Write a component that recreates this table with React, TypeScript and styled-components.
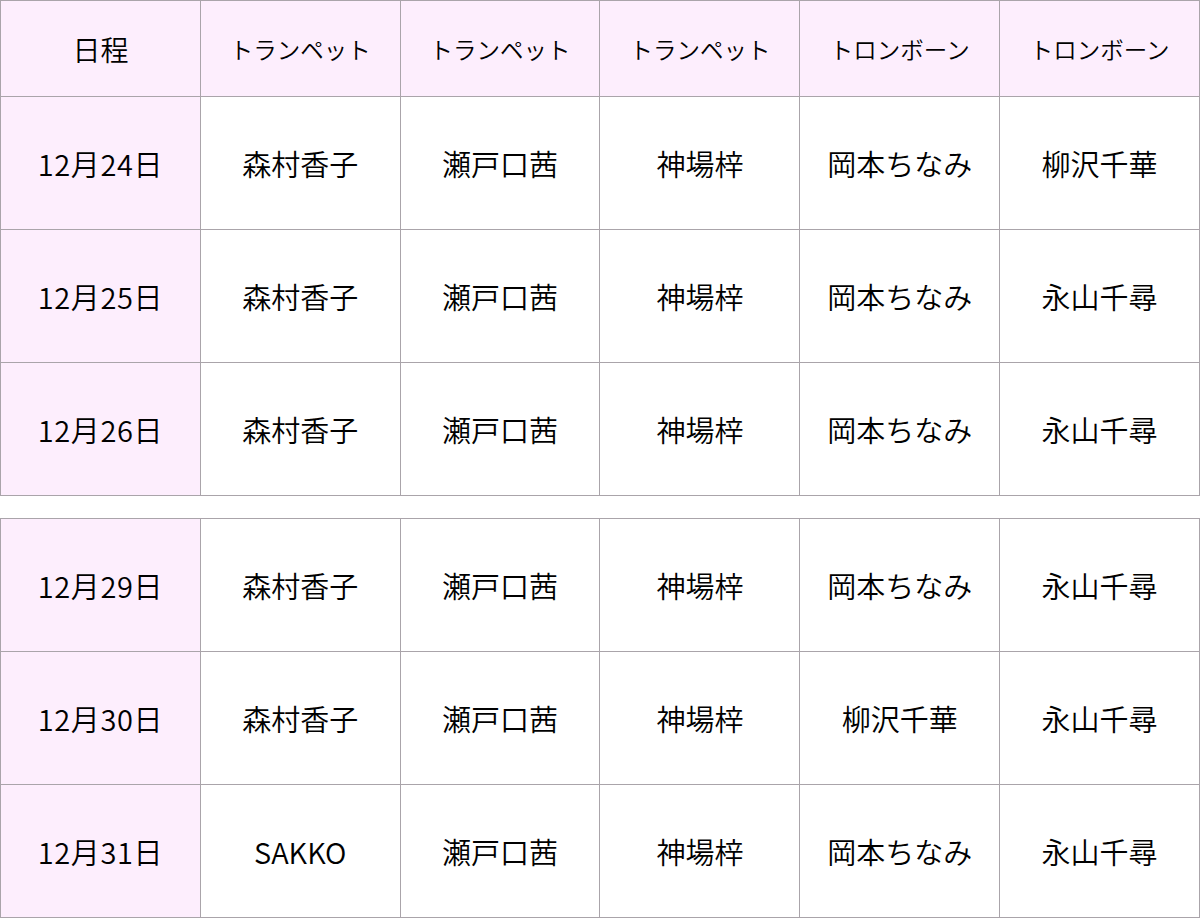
import React from 'react';
import styled, { createGlobalStyle } from 'styled-components';

const GlobalStyle = createGlobalStyle`
  html, body {
    margin: 0;
    padding: 0;
    background: #ffffff;
  }
  body {
    font-family: "Noto Sans CJK JP", "Noto Sans", sans-serif;
    color: #000000;
  }
`;

const Page = styled.div`
  width: 1200px;
  display: flex;
  flex-direction: column;
  gap: 22px;
`;

const Table = styled.div<{ $withHead?: boolean }>`
  display: grid;
  grid-template-columns: repeat(6, 1fr);
  grid-template-rows: ${p => (p.$withHead ? '95px' : 'none')};
  grid-auto-rows: 132px;
  gap: 1px;
  padding: 1px;
  background: #aaa4aa;
`;

const Cell = styled.div<{ $pink?: boolean; $head?: boolean; $date?: boolean }>`
  display: flex;
  align-items: center;
  justify-content: center;
  background: ${p => (p.$pink ? '#fdeefd' : '#ffffff')};
  font-size: ${p => (p.$head ? '23.5px' : '29px')};
  font-weight: 350;
  letter-spacing: ${p => (p.$date ? '0.6px' : '0')};
  white-space: nowrap;
`;

const HeadLabel = styled.span`
  font-size: 28px;
`;

const parts = ['トランペット', 'トランペット', 'トランペット', 'トロンボーン', 'トロンボーン'];

const first = [
  ['12月24日', '森村香子', '瀬戸口茜', '神場梓', '岡本ちなみ', '柳沢千華'],
  ['12月25日', '森村香子', '瀬戸口茜', '神場梓', '岡本ちなみ', '永山千尋'],
  ['12月26日', '森村香子', '瀬戸口茜', '神場梓', '岡本ちなみ', '永山千尋'],
];

const second = [
  ['12月29日', '森村香子', '瀬戸口茜', '神場梓', '岡本ちなみ', '永山千尋'],
  ['12月30日', '森村香子', '瀬戸口茜', '神場梓', '柳沢千華', '永山千尋'],
  ['12月31日', 'SAKKO', '瀬戸口茜', '神場梓', '岡本ちなみ', '永山千尋'],
];

function Rows({ rows }: { rows: string[][] }) {
  return (
    <>
      {rows.map(row =>
        row.map((v, i) => (
          <Cell key={row[0] + i} $pink={i === 0} $date={i === 0}>
            {v}
          </Cell>
        ))
      )}
    </>
  );
}

export default function App() {
  return (
    <Page>
      <GlobalStyle />
      <Table $withHead>
        <Cell $pink $head>
          <HeadLabel>日程</HeadLabel>
        </Cell>
        {parts.map((p, i) => (
          <Cell key={i} $pink $head>
            {p}
          </Cell>
        ))}
        <Rows rows={first} />
      </Table>
      <Table>
        <Rows rows={second} />
      </Table>
    </Page>
  );
}
